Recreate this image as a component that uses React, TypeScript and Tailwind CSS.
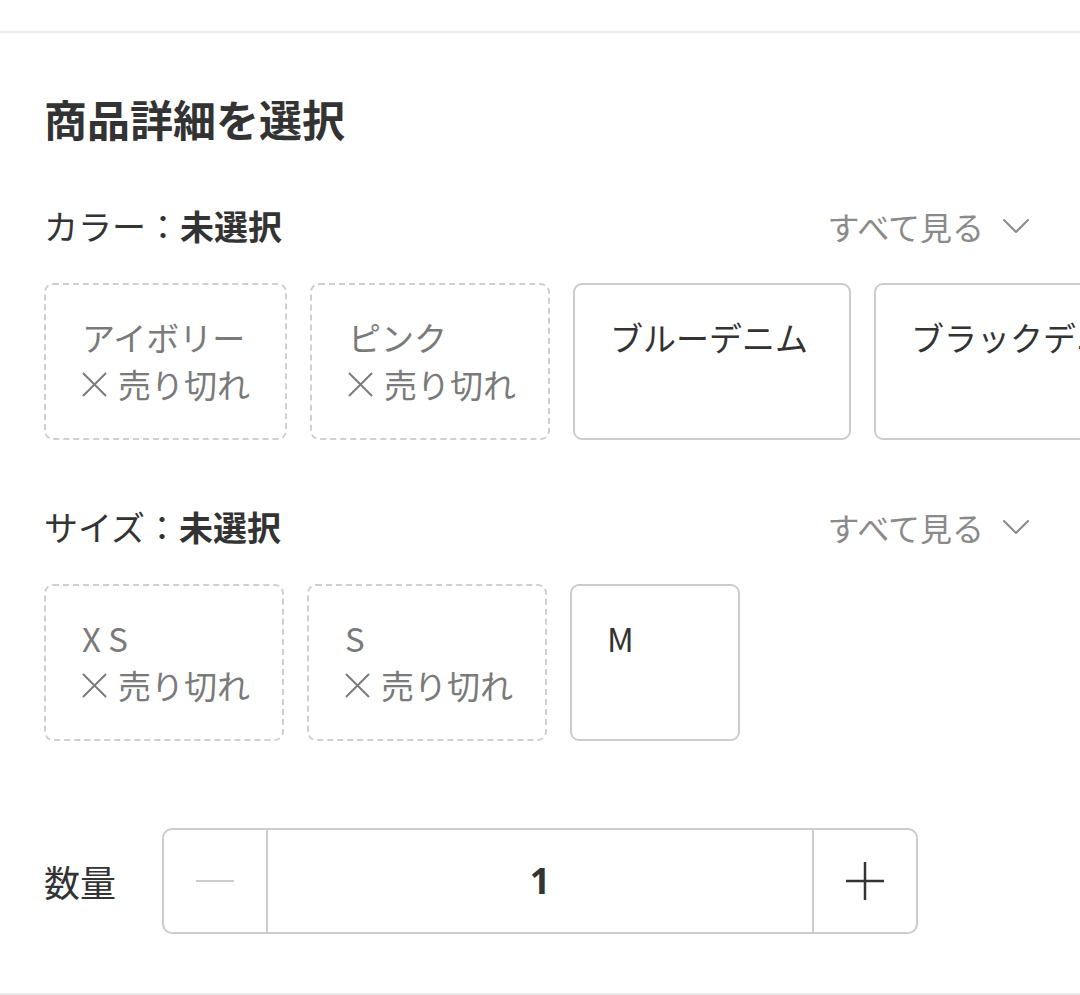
import type { ReactNode } from 'react'

type Option = { label: string; soldOut: boolean; width: string }

const COLORS: Option[] = [
  { label: 'アイボリー', soldOut: true, width: 'w-[243px]' },
  { label: 'ピンク', soldOut: true, width: 'w-[240px]' },
  { label: 'ブルーデニム', soldOut: false, width: 'w-[278px]' },
  { label: 'ブラックデニム', soldOut: false, width: 'w-[310px]' },
]

const SIZES: Option[] = [
  { label: 'X S', soldOut: true, width: 'w-[240px]' },
  { label: 'S', soldOut: true, width: 'w-[240px]' },
  { label: 'M', soldOut: false, width: 'w-[170px]' },
]

const FONT = 'font-["Noto_Sans_CJK_JP","Noto_Sans",sans-serif]'

function Chevron() {
  return (
    <svg viewBox="0 0 28 16" className="h-[16px] w-[28px]" fill="none" stroke="#8a8a8a" strokeWidth="2" strokeLinecap="round" strokeLinejoin="round" aria-hidden="true">
      <path d="M2 2l12 12L26 2" />
    </svg>
  )
}

// thin cross in front of 売り切れ
function SoldOutMark() {
  return (
    <svg viewBox="0 0 26 26" className="mr-[11px] h-[25px] w-[25px] shrink-0" fill="none" stroke="#7a7a7a" strokeWidth="2" aria-hidden="true">
      <path d="M1 1l24 24M25 1L1 25" />
    </svg>
  )
}

function SectionHeader({ title }: { title: string }) {
  return (
    <div className="flex items-center justify-between pr-[50px]">
      <p className="text-[34px] leading-[34px] text-[#333]">
        {title}：<span className="font-bold">未選択</span>
      </p>
      <button type="button" className="flex items-center gap-[18px] text-[32px] leading-[34px] text-[#8a8a8a]">
        すべて見る
        <Chevron />
      </button>
    </div>
  )
}

function OptionBox({ option }: { option: Option }) {
  const base = `${option.width} h-[157px] shrink-0 overflow-hidden rounded-[9px] border-2 pt-[29px] text-[33px] leading-[47px]`
  if (option.soldOut) {
    return (
      <div className={`${base} border-dashed border-[#cfcfcf] pl-[36px] text-[#7a7a7a]`}>
        <div className="whitespace-nowrap">{option.label}</div>
        <div className="flex items-center whitespace-nowrap">
          <SoldOutMark />
          売り切れ
        </div>
      </div>
    )
  }
  return (
    <div className={`${base} border-[#cccccc] pl-[35px] text-[#333]`}>
      <div className="whitespace-nowrap">{option.label}</div>
    </div>
  )
}

function OptionRow({ children }: { children: ReactNode }) {
  return <div className="mt-[40px] flex gap-[23px] overflow-hidden">{children}</div>
}

export default function App() {
  return (
    <div className={`h-[995px] w-[1080px] overflow-hidden bg-white ${FONT}`}>
      <div className="h-[31px]" />
      <div className="flex h-[964px] flex-col border-t-2 border-b-2 border-[#e9e9e9] pl-[44px]">
        <h2 className="mt-[64px] text-[43px] font-bold leading-[42px] text-[#333]">商品詳細を選択</h2>

        <div className="mt-[70px]">
          <SectionHeader title="カラー" />
          <OptionRow>
            {COLORS.map((c) => (
              <OptionBox key={c.label} option={c} />
            ))}
          </OptionRow>
        </div>

        <div className="mt-[70px]">
          <SectionHeader title="サイズ" />
          <OptionRow>
            {SIZES.map((s) => (
              <OptionBox key={s.label} option={s} />
            ))}
          </OptionRow>
        </div>

        <div className="mt-[87px] flex items-center gap-[46px]">
          <span className="text-[36px] leading-[36px] text-[#333]">数量</span>
          <div className="flex h-[106px] w-[756px] rounded-[10px] border-2 border-[#cccccc]">
            <button type="button" className="flex w-[104px] items-center justify-center border-r-2 border-[#cccccc]">
              <span className="block h-[2px] w-[38px] bg-[#cccccc]" />
            </button>
            <div className="flex flex-1 items-center justify-center font-['Noto_Sans',sans-serif] text-[36px] font-bold text-[#333]">1</div>
            <button type="button" className="flex w-[104px] items-center justify-center border-l-2 border-[#cccccc]">
              <svg viewBox="0 0 40 40" className="h-[40px] w-[40px]" stroke="#333" strokeWidth="2.5" aria-hidden="true">
                <path d="M1 20h38M20 1v38" />
              </svg>
            </button>
          </div>
        </div>
      </div>
    </div>
  )
}
